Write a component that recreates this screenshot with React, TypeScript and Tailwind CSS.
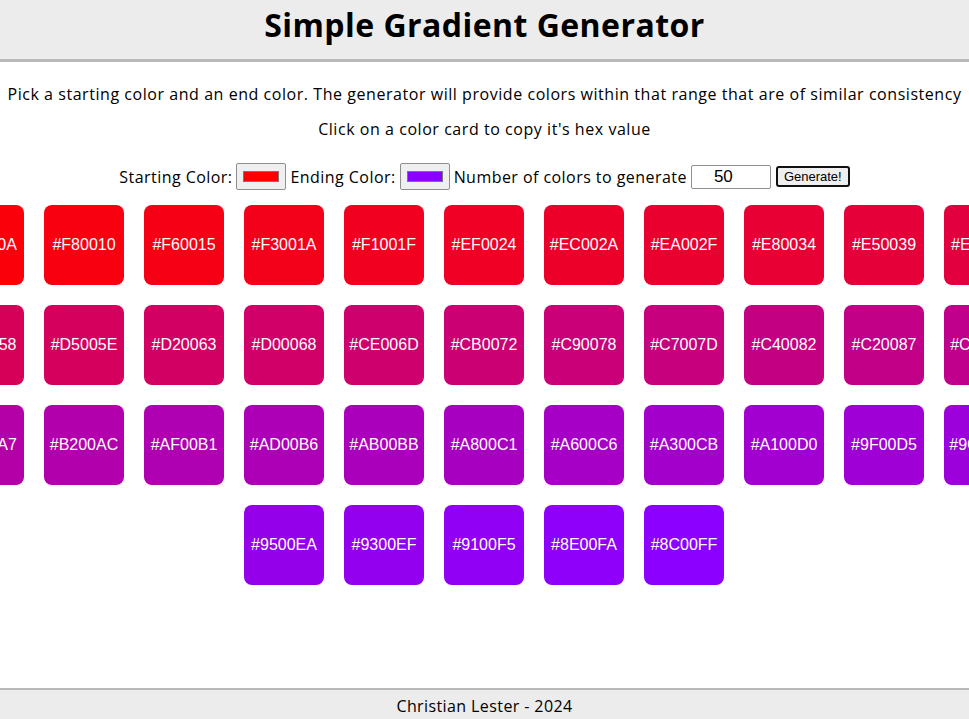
import React, { useState } from 'react';

const hex = (n: number) => n.toString(16).padStart(2, '0').toUpperCase();

const parse = (c: string) => [1, 3, 5].map((i) => parseInt(c.slice(i, i + 2), 16));

const makeGradient = (start: string, end: string, count: number) => {
  const a = parse(start);
  const b = parse(end);
  const out: string[] = [];
  for (let i = 0; i < count; i++) {
    const t = count > 1 ? i / (count - 1) : 0;
    out.push('#' + a.map((v, k) => hex(Math.round(v + (b[k] - v) * t))).join(''));
  }
  return out;
};

const App: React.FC = () => {
  const [start, setStart] = useState('#ff0000');
  const [end, setEnd] = useState('#8c00ff');
  const [count, setCount] = useState(50);
  const [colors, setColors] = useState(() => makeGradient('#ff0000', '#8c00ff', 50));

  return (
    <div className="min-h-screen flex flex-col overflow-hidden bg-white text-black font-['Open_Sans',sans-serif]">
      {/* Header */}
      <header className="h-[62px] bg-[#ececec] border-b-[3px] border-[#b9b9b9] flex items-center justify-center">
        <h1 className="text-[32px] font-bold tracking-[0.45px] -mt-[9px]">Simple Gradient Generator</h1>
      </header>

      <main className="flex flex-col items-center">
        <p className="mt-[20px] text-[16px] leading-[24px] tracking-[0.55px] whitespace-nowrap">
          Pick a starting color and an end color. The generator will provide colors within that range that are of similar consistency
        </p>
        <p className="mt-[11px] text-[16px] leading-[24px] tracking-[0.55px]">Click on a color card to copy it's hex value</p>

        {/* Controls */}
        <div className="mt-[22px] flex items-center gap-[4px] text-[16px] tracking-[0.45px]">
          <span>Starting Color:</span>
          <input
            type="color"
            value={start}
            onChange={(e) => setStart(e.target.value)}
            className="w-[50px] h-[27px] border border-[#8f8f8f] rounded-[2px] bg-[#efefef] px-[4px] py-[3px]"
          />
          <span>Ending Color:</span>
          <input
            type="color"
            value={end}
            onChange={(e) => setEnd(e.target.value)}
            className="w-[50px] h-[27px] border border-[#8f8f8f] rounded-[2px] bg-[#efefef] px-[4px] py-[3px]"
          />
          <span>Number of colors to generate</span>
          <input
            type="number"
            value={count}
            onChange={(e) => setCount(Number(e.target.value))}
            className="w-[80px] h-[24px] border border-[#8f8f8f] rounded-[2px] text-center text-[17px] tracking-normal font-['Liberation_Sans',sans-serif]"
          />
          <button
            onClick={() => setColors(makeGradient(start, end, count))}
            className="ml-[1px] h-[21px] px-[6px] border-2 border-[#111] rounded-[3px] bg-[#efefef] text-[13px] tracking-normal font-['Liberation_Sans',sans-serif] leading-none"
          >
            Generate!
          </button>
        </div>

        {/* Cards */}
        <div className="mt-[5px] w-full pr-[1px] flex justify-center">
          <div className="w-[1500px] shrink-0 flex flex-wrap justify-center">
            {colors.map((c) => (
              <div
                key={c}
                onClick={() => navigator.clipboard?.writeText(c)}
                className="w-[80px] h-[80px] m-[10px] rounded-[8px] flex items-center justify-center text-white text-[16px] font-['Liberation_Sans',sans-serif] cursor-pointer"
                style={{ backgroundColor: c }}
              >
                {c}
              </div>
            ))}
          </div>
        </div>
      </main>

      {/* Footer */}
      <footer className="mt-auto h-[31px] bg-[#ececec] border-t-2 border-[#b9b9b9] flex items-center justify-center pt-[2px] text-[16px] tracking-[0.4px]">
        Christian Lester - 2024
      </footer>
    </div>
  );
};

export default App;
